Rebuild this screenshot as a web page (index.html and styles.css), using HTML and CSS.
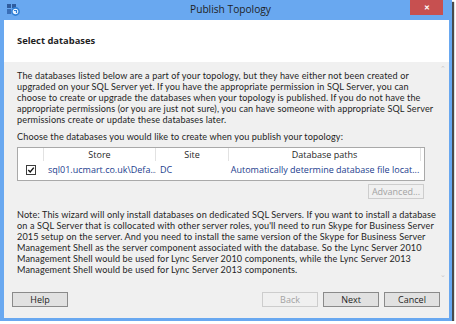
FILE: index.html
```html
<!DOCTYPE html>
<html lang="en">
<head>
    <meta charset="UTF-8">
    <meta name="viewport" content="width=device-width, initial-scale=1.0">
    <title>Publish Topology</title>
    <link rel="stylesheet" href="styles.css">
</head>
<body>
    <div class="ventana">
        <div class="barra">
            <svg class="icono" width="14" height="13" viewBox="0 0 14 13">
                <rect x="1" y="1" width="4" height="4" fill="#2f5c9e"/>
                <rect x="6" y="1" width="4" height="4" fill="#2f5c9e"/>
                <rect x="1" y="6" width="4" height="5" fill="#3a6fb8"/>
                <circle cx="9.5" cy="8.5" r="3.6" fill="#e8f3ff" stroke="#2f7fd6" stroke-width="1.6"/>
                <path d="M8 7.5 L10.5 7.5 L10.5 10" fill="none" stroke="#2f7fd6" stroke-width="1.2"/>
            </svg>
            <span class="titulo">Publish Topology</span>
            <span class="cerrar">&#x2715;</span>
        </div>
        <div class="contenido">
            <div class="cabecera">Select databases</div>
            <div class="cuerpo">
                <span class="flecha arriba">&#x2303;</span>
                <span class="flecha abajo">&#x2304;</span>
                <p class="texto">The databases listed below are a part of your topology, but they have either not been created or<br>
                upgraded on your SQL Server yet. If you have the appropriate permission in SQL Server, you can<br>
                choose to create or upgrade the databases when your topology is published. If you do not have the<br>
                appropriate permissions (or you are just not sure), you can have someone with appropriate SQL Server<br>
                permissions create or update these databases later.</p>
                <p class="texto">Choose the databases you would like to create when you publish your topology:</p>
                <div class="tabla">
                    <div class="fila encabezado">
                        <span class="col col-check"></span>
                        <span class="col col-store">Store</span>
                        <span class="col col-site">Site</span>
                        <span class="col col-path">Database paths</span>
                        <span class="col col-resto"></span>
                    </div>
                    <div class="fila datos">
                        <span class="col col-check">
                            <svg class="casilla" width="10" height="10" viewBox="0 0 10 10">
                                <rect x="0.5" y="0.5" width="9" height="9" fill="#ffffff" stroke="#3c3c3c"/>
                                <path d="M2.3 5 L4.2 7 L7.8 2.6" fill="none" stroke="#111111" stroke-width="1.4"/>
                            </svg>
                        </span>
                        <span class="col col-store enlace">sql01.ucmart.co.uk\Defa...</span>
                        <span class="col col-site enlace">DC</span>
                        <span class="col col-path enlace">Automatically determine database file locat...</span>
                    </div>
                </div>
                <div class="avanzado">
                    <span class="boton desactivado">Advanced...</span>
                </div>
                <p class="texto nota">Note: This wizard will only install databases on dedicated SQL Servers. If you want to install a database<br>
                on a SQL Server that is collocated with other server roles, you'll need to run Skype for Business Server<br>
                2015 setup on the server. And you need to install the same version of the Skype for Business Server<br>
                Management Shell as the server component associated with the database. So the Lync Server 2010<br>
                Management Shell would be used for Lync Server 2010 components, while the Lync Server 2013<br>
                Management Shell would be used for Lync Server 2013 components.</p>
            </div>
            <div class="pie">
                <span class="boton">Help</span>
                <span class="hueco"></span>
                <span class="boton desactivado">Back</span>
                <span class="boton">Next</span>
                <span class="boton">Cancel</span>
            </div>
        </div>
    </div>
</body>
</html>
```

FILE: styles.css
```css
body {
    margin: 0;
    background-color: #ffffff;
    font-family: 'Open Sans', 'Noto Sans', sans-serif;
    color: #1f1f1f;
}
.ventana {
    width: 452px;
    height: 321px;
    box-sizing: border-box;
    padding: 0 3px 3px 4px;
    background-color: #69a8f0;
    box-shadow: 2px 2px 1px #4a4a4a;
    display: flex;
    flex-direction: column;
}
.barra {
    height: 20px;
    display: flex;
    align-items: center;
    position: relative;
}
.icono {
    position: absolute;
    left: 2px;
    top: 3px;
}
.titulo {
    flex: 1;
    text-align: center;
    font-size: 10.2px;
    padding-left: 8px;
    padding-bottom: 2px;
}
.cerrar {
    position: absolute;
    right: 6px;
    top: 0;
    width: 33px;
    height: 15px;
    background-color: #c75050;
    color: #ffffff;
    font-size: 7px;
    font-weight: bold;
    display: flex;
    align-items: center;
    justify-content: center;
}
.contenido {
    flex: 1;
    display: flex;
    flex-direction: column;
    background-color: #f0f0f0;
}
.cabecera {
    height: 42px;
    background-color: #ffffff;
    box-sizing: border-box;
    padding: 14px 0 0 13px;
    font-size: 9.4px;
    font-weight: bold;
}
.cuerpo {
    position: relative;
    padding: 8px 14px 0 13px;
    height: 218px;
    box-sizing: border-box;
}
.flecha {
    position: absolute;
    right: 3px;
    color: #c8c8c8;
    font-size: 7px;
    line-height: 7px;
}
.arriba { top: 3px; }
.abajo { bottom: 2px; }
.texto {
    margin: 0 0 6px 0;
    font-family: 'Lato', 'Open Sans', sans-serif;
    font-size: 9.1px;
    letter-spacing: 0.12px;
    line-height: 11px;
    white-space: nowrap;
}
.tabla {
    width: 408px;
    margin-top: -1px;
    background-color: #ffffff;
    border: 1px solid #a9a9a9;
    box-sizing: border-box;
    height: 34px;
}
.fila {
    display: flex;
    font-size: 9px;
}
.encabezado {
    height: 13px;
    line-height: 13px;
}
.encabezado .col {
    border-right: 1px solid #e2e2e2;
    text-align: center;
}
.encabezado .col-resto {
    border-right: none;
}
.datos {
    height: 17px;
    line-height: 17px;
}
.col {
    box-sizing: border-box;
    white-space: nowrap;
    overflow: hidden;
}
.col-check { width: 26px; padding-left: 8px; }
.col-store { width: 112px; }
.col-site { width: 73px; }
.col-path { width: 192px; }
.col-resto { flex: 1; }
.datos .col-store { padding-left: 4px; }
.datos .col-site { padding-left: 4px; }
.datos .col-path { text-align: center; }
.enlace {
    color: #23408e;
}
.casilla {
    vertical-align: middle;
    margin-top: -2px;
}
.avanzado {
    width: 408px;
    display: flex;
    justify-content: flex-end;
    margin-top: 3px;
    margin-bottom: 10px;
}
.avanzado .boton {
    margin-right: 1px;
}
.boton {
    width: 56px;
    height: 15px;
    box-sizing: border-box;
    border: 1px solid #8a8a8a;
    background-color: #e1e1e1;
    font-size: 9px;
    display: flex;
    align-items: center;
    justify-content: center;
}
.desactivado {
    color: #a3a3a3;
    border-color: #cdcdcd;
    background-color: #f0f0f0;
}
.pie {
    display: flex;
    padding: 12px 9px 0 8px;
    gap: 5px;
}
.hueco {
    flex: 1;
}
```
